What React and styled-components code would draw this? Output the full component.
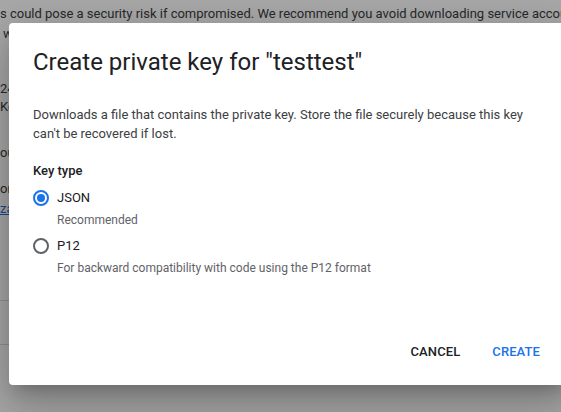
import styled, { createGlobalStyle } from "styled-components";

const Global = createGlobalStyle`
  html, body {
    margin: 0;
    padding: 0;
    overflow: hidden;
    background: #ffffff;
  }
  body {
    font-family: Roboto, "Liberation Sans", Arial, sans-serif;
  }
`

const Page = styled.div`
  width: 561px;
  height: 412px;
  position: relative;
  overflow: hidden;
  color: #3c4043;
  font-size: 13px;
  line-height: 20px;
`

const PageLine = styled.div`
  margin-top: ${(p) => p.$top}px;
  padding-left: ${(p) => p.$left || 0}px;
  white-space: nowrap;
`

const PageLink = styled.span`
  color: #1a73e8;
  text-decoration: underline;
`

const Rule = styled.div`
  margin-top: ${(p) => p.$top}px;
  height: 1px;
  background: #dadce0;
`

const Scrim = styled.div`
  position: absolute;
  inset: 0;
  background: rgba(0, 0, 0, 0.34);
`

const Dialog = styled.div`
  position: absolute;
  left: 9px;
  top: 23px;
  width: 560px;
  height: 362px;
  background: #ffffff;
  border-radius: 4px;
  box-shadow: 0 11px 15px -7px rgba(0, 0, 0, 0.2),
    0 24px 38px 3px rgba(0, 0, 0, 0.14), 0 9px 46px 8px rgba(0, 0, 0, 0.12);
  display: flex;
  flex-direction: column;
  color: #202124;
`

const Content = styled.div`
  padding: 23px 24px 0;
`

const Title = styled.h2`
  margin: 0 0 27px;
  font-size: 24px;
  line-height: 32px;
  font-weight: 400;
  color: #202124;
`

const Text = styled.p`
  margin: 0;
  max-width: 500px;
  font-size: 13px;
  line-height: 19px;
  color: #3c4043;
`

const Label = styled.div`
  margin-top: 18px;
  font-size: 13px;
  line-height: 20px;
  font-weight: 500;
  color: #202124;
`

const Options = styled.div`
  margin-top: 7px;
  display: flex;
  flex-direction: column;
  gap: 8px;
`

const Option = styled.div`
  display: flex;
  flex-direction: column;
`

const OptionRow = styled.div`
  display: flex;
  align-items: center;
  gap: 8px;
  font-size: 13px;
  line-height: 20px;
  color: #202124;
`

const Radio = styled.span`
  width: 16px;
  height: 16px;
  box-sizing: border-box;
  border-radius: 50%;
  border: 2px solid ${(p) => (p.$checked ? "#1a73e8" : "#5f6368")};
  display: flex;
  align-items: center;
  justify-content: center;

  &::after {
    content: "";
    width: 8px;
    height: 8px;
    border-radius: 50%;
    background: ${(p) => (p.$checked ? "#1a73e8" : "transparent")};
  }
`

const Hint = styled.div`
  margin-top: 4px;
  padding-left: 24px;
  font-size: 12px;
  line-height: 16px;
  color: #5f6368;
`

const Actions = styled.div`
  margin-top: auto;
  padding: 0 13px 16px;
  display: flex;
  justify-content: flex-end;
`

const Button = styled.button`
  height: 36px;
  padding: 0 16px;
  border: none;
  background: transparent;
  font-family: Roboto, "Liberation Sans", Arial, sans-serif;
  font-size: 13px;
  font-weight: 500;
  letter-spacing: 0.1px;
  color: ${(p) => (p.$primary ? "#1a73e8" : "#202124")};
  cursor: pointer;
`

export default function App() {
  return (
    <>
      <Global />
      <Page>
        <PageLine $top={4}>
          s could pose a security risk if compromised. We recommend you avoid downloading service account keys
        </PageLine>
        <PageLine $top={0} $left={3}>with Workload Identity Federation</PageLine>
        <PageLine $top={35}>24 Oct 2023</PageLine>
        <PageLine $top={-2}>Key</PageLine>
        <PageLine $top={26}>ou can add keys</PageLine>
        <PageLine $top={16}>organization policy</PageLine>
        <PageLine $top={0}>
          <PageLink>zation policies</PageLink>
        </PageLine>
        <Rule $top={81} />
        <Rule $top={43} />
        <Scrim />
        <Dialog>
          <Content>
            <Title>Create private key for "testtest"</Title>
            <Text>
              Downloads a file that contains the private key. Store the file securely because this key
              can't be recovered if lost.
            </Text>
            <Label>Key type</Label>
            <Options>
              <Option>
                <OptionRow>
                  <Radio $checked />
                  JSON
                </OptionRow>
                <Hint>Recommended</Hint>
              </Option>
              <Option>
                <OptionRow>
                  <Radio />
                  P12
                </OptionRow>
                <Hint>For backward compatibility with code using the P12 format</Hint>
              </Option>
            </Options>
          </Content>
          <Actions>
            <Button>CANCEL</Button>
            <Button $primary>CREATE</Button>
          </Actions>
        </Dialog>
      </Page>
    </>
  )
}
